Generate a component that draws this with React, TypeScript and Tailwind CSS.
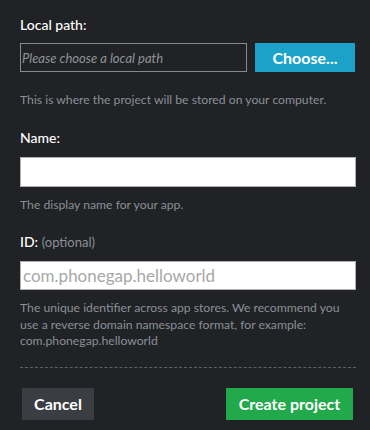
import * as React from "react";

const FONT = { fontFamily: "Lato, 'Open Sans', sans-serif" };

function Help({ children }: { children: React.ReactNode }) {
  return <p className="text-[12.2px] leading-[16.5px] text-[#8b9096]">{children}</p>;
}

export default function App() {
  const [name, setName] = React.useState("");
  const [id, setId] = React.useState("");

  return (
    <div className="h-[430px] w-[370px] bg-[#202226] pl-5 pr-[14px] pt-[15px]" style={FONT}>
      <label className="block text-[14px] font-medium leading-[20px] text-white">Local path:</label>
      <div className="mt-[8px] flex gap-[8px]">
        <input
          readOnly
          placeholder="Please choose a local path"
          className="h-[29px] w-[227px] shrink-0 border border-[#8a8a8a] bg-transparent px-[1px] text-[13px] italic text-white outline-none placeholder:text-[#8f9398]"
        />
        <button type="button" className="h-[29px] w-[100px] shrink-0 bg-[#1ca2c8] text-[16px] font-bold text-white">
          Choose...
        </button>
      </div>
      <div className="mt-[20px]">
        <Help>This is where the project will be stored on your computer.</Help>
      </div>

      <label className="mt-[19px] block text-[14px] font-medium leading-[20px] text-white">Name:</label>
      <input
        value={name}
        onChange={(e) => setName(e.target.value)}
        className="mt-[9px] block h-[30px] w-full border border-[#b0b0b0] bg-white px-2 text-[15px] text-[#333] outline-none"
      />
      <div className="mt-[10px]">
        <Help>The display name for your app.</Help>
      </div>

      <label className="mt-[19px] block text-[14px] font-medium leading-[20px] text-white">
        ID: <span className="text-[13px] font-normal text-[#8b9096]">(optional)</span>
      </label>
      <input
        value={id}
        onChange={(e) => setId(e.target.value)}
        placeholder="com.phonegap.helloworld"
        className="mt-[9px] block h-[29px] w-full border border-[#b0b0b0] bg-white px-[2px] text-[17px] text-[#333] outline-none placeholder:text-[#a8a8a8]"
      />
      <div className="mt-[10px]">
        <Help>
          The unique identifier across app stores. We recommend you use a reverse domain namespace format, for example:
          com.phonegap.helloworld
        </Help>
      </div>

      <div className="mt-[17px] border-t border-dashed border-[#5d6066]" />

      <div className="mt-[20px] flex justify-between pl-[2px] pr-[3px]">
        <button type="button" className="h-[32px] w-[72px] bg-[#3a3d42] text-[16px] font-bold text-white">
          Cancel
        </button>
        <button type="button" className="h-[32px] w-[127px] bg-[#22a94b] text-[16px] font-bold text-white">
          Create project
        </button>
      </div>
    </div>
  );
}
